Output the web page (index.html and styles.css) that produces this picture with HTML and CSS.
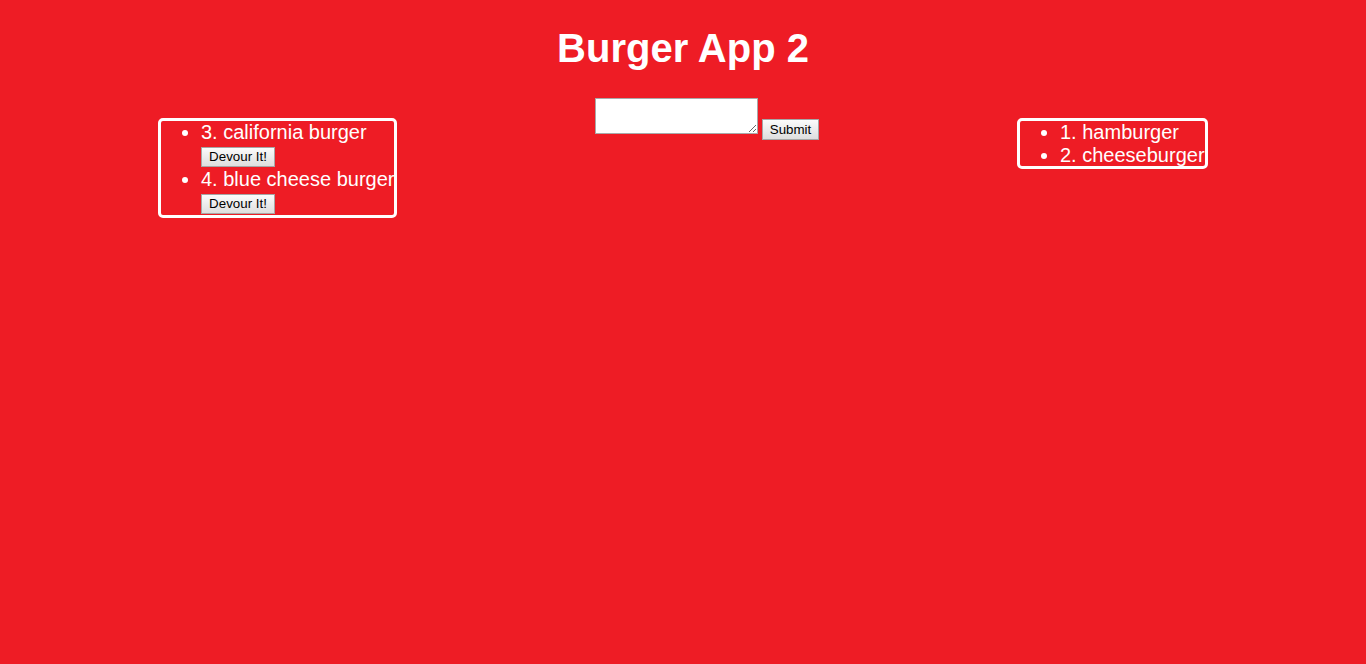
FILE: index.html
```html
<!DOCTYPE html>
<html>
<head>
<meta charset="utf-8">
<title>Burger App 2</title>
<link rel="stylesheet" href="styles.css">
</head>
<body>
<h1 class="title">Burger App 2</h1>
<div class="main">
  <ul class="box">
    <li>
      <div class="name">3. california burger</div>
      <button class="btn devour">Devour It!</button>
    </li>
    <li>
      <div class="name">4. blue cheese burger</div>
      <button class="btn devour">Devour It!</button>
    </li>
  </ul>
  <form class="form">
    <textarea class="input"></textarea>
    <button type="button" class="btn submit">Submit</button>
  </form>
  <ul class="box">
    <li><div class="name">1. hamburger</div></li>
    <li><div class="name">2. cheeseburger</div></li>
  </ul>
</div>
</body>
</html>
```

FILE: styles.css
```css
html, body {
  margin: 0;
  padding: 0;
  background: #ee1c25;
  min-height: 100%;
}
body {
  font-family: "Liberation Sans", Arial, sans-serif;
  color: #fff;
  height: 664px;
}
.title {
  margin: 0;
  padding-top: 25px;
  font-size: 40px;
  line-height: 46px;
  font-weight: bold;
  text-align: center;
}
.main {
  margin-top: 27px;
  display: grid;
  grid-template-columns: 437px 422px auto;
  padding-left: 158px;
  align-items: start;
  justify-items: start;
}
.box {
  margin: 20px 0 0;
  padding: 0 0 0 40px;
  border: 3px solid #fff;
  border-radius: 5px;
  font-size: 20px;
  line-height: 22.5px;
  list-style: disc;
}
.name {
  white-space: nowrap;
}
.btn {
  font-family: "Liberation Sans", Arial, sans-serif;
  font-size: 13.33px;
  color: #000;
  background: linear-gradient(#fbfbfb, #dedede);
  border: 1px solid #a6a6a6;
  border-radius: 0;
  box-sizing: border-box;
  padding: 0 6px;
  line-height: 16px;
}
.devour {
  display: block;
  height: 20px;
  margin: 3px 0 1.5px;
  width: 74px;
}
.form {
  display: flex;
  align-items: flex-start;
  gap: 4px;
  margin: 0;
}
.input {
  box-sizing: border-box;
  width: 163px;
  height: 36px;
  margin: 0;
  border: 1px solid #a9a9a9;
  background: #fff;
  padding: 2px;
}
.submit {
  margin-top: 21px;
  height: 21px;
  width: 57px;
}
```
